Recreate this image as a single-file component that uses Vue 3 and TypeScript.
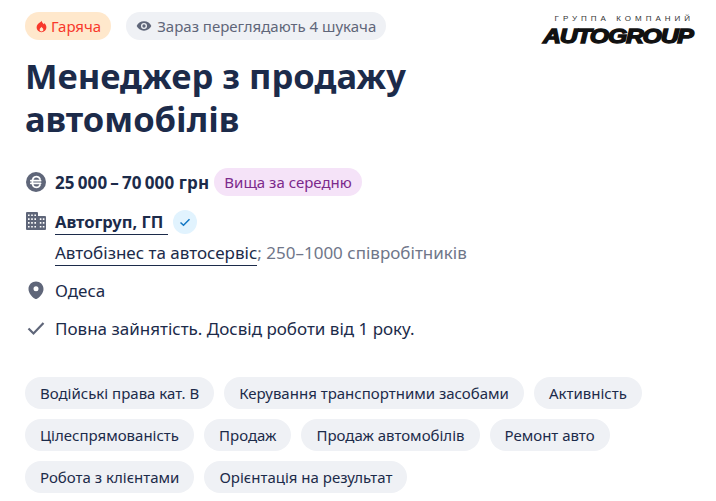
<template>
  <div class="job">
    <div class="top">
      <div class="badges">
        <span class="badge hot">
          <svg class="flame" viewBox="0 0 16 16" width="13" height="13">
            <path fill="#f8382b" fill-rule="evenodd" d="M8.200 1c.4 2.200 1.500 3 2.700 4.300.3-.5.5-1 .5-1.600C13 5 14 6.900 14 9c0 3.300-2.700 6-6 6s-6-2.700-6-6c0-2.900 2-4.300 3.500-5.600C6.800 2.600 7.800 2 8.200 1zM8 8.200c-.5 1.100-2.300 2-2.300 3.800 0 1.300 1 2.100 2.300 2.100s2.300-.8 2.300-2.100c0-1.800-1.800-2.700-2.300-3.800z" />
          </svg>
          Гаряча
        </span>
        <span class="badge viewers">
          <svg viewBox="0 0 24 24" width="16" height="16">
            <path fill="#5f6679" d="M12 5C7 5 2.700 8.100 1 12c1.700 3.900 6 7 11 7s9.300-3.100 11-7c-1.700-3.900-6-7-11-7zm0 11.500a4.500 4.500 0 1 1 0-9 4.500 4.500 0 0 1 0 9zm0-7a2.500 2.500 0 1 0 0 5 2.500 2.500 0 0 0 0-5z" />
          </svg>
          Зараз переглядають 4 шукача
        </span>
      </div>
      <div class="logo">
        <span class="logo-sub">ГРУППА КОМПАНИЙ</span>
        <span class="logo-main">AUTOGROUP</span>
      </div>
    </div>

    <h1>Менеджер з продажу автомобілів</h1>

    <ul class="facts">
      <li class="fact">
        <svg class="ico" viewBox="0 0 20 20" width="20" height="20">
          <circle cx="10" cy="10" r="10" fill="#5f6679" />
          <path fill="none" stroke="#fff" stroke-width="1.700" stroke-linecap="round" d="M14 7C13.400 5.400 12 4.600 10.300 4.600 8 4.600 6.400 6.700 6.400 10s1.600 5.400 3.900 5.400c1.700 0 3.100-.8 3.700-2.400M4.800 8.700h9.800M4.800 11.300h9.800" />
        </svg>
        <span class="salary">25&#8201;000&#8201;–&#8201;70&#8201;000 грн</span>
        <span class="avg">Вища за середню</span>
      </li>
      <li class="fact company">
        <svg class="ico" viewBox="0 0 20 20" width="20" height="20">
          <path fill="#5f6679" fill-rule="evenodd" d="M1 1h10a1 1 0 0 1 1 1v3h7a1 1 0 0 1 1 1v12a1 1 0 0 1-1 1H1a1 1 0 0 1-1-1V2a1 1 0 0 1 1-1zm1 2.500v1.600h1.600V3.500H2zm3.200 0v1.600h1.600V3.500H5.200zm3.200 0v1.600H10V3.500H8.400zM2 7.300v1.600h1.600V7.300H2zm3.200 0v1.600h1.600V7.300H5.200zm3.200 0v1.600H10V7.300H8.400zM2 11.100v1.600h1.600v-1.600H2zm3.200 0v1.600h1.600v-1.600H5.200zm3.200 0v1.600H10v-1.600H8.400zM2 14.900v1.600h1.600v-1.600H2zm3.200 0v1.600h1.600v-1.600H5.200zm3.200 0v1.600H10v-1.600H8.400zm5.400-7.600v1.600h1.600V7.300h-1.600zm3 0v1.600h1.600V7.300h-1.600zm-3 3.800v1.600h1.600v-1.600h-1.600zm3 0v1.600h1.600v-1.600h-1.600zm-3 3.800v1.600h1.600v-1.600h-1.600zm3 0v1.600h1.600v-1.600h-1.600z" />
        </svg>
        <div class="company-info">
          <div class="company-name">
            <a class="name-link">Автогруп, ГП</a>
            <span class="verified">
              <svg viewBox="0 0 12 12" width="12" height="12">
                <path fill="none" stroke="#1277c4" stroke-width="1.500" d="M1.500 6.500 4.500 9.300 10.500 3.200" />
              </svg>
            </span>
          </div>
          <div class="company-meta"><a class="sector">Автобізнес та автосервіс</a><span class="muted">; 250–1000 співробітників</span></div>
        </div>
      </li>
      <li class="fact">
        <svg class="ico" viewBox="0 0 20 20" width="20" height="20">
          <path fill="#5f6679" fill-rule="evenodd" d="M10 1.500c-4.100 0-7.500 3.200-7.500 7.400 0 3.800 3.100 7.600 6.500 9.800.6.400 1.400.4 2 0 3.400-2.200 6.500-6 6.500-9.800 0-4.200-3.400-7.400-7.500-7.400zm0 9.700a2.500 2.500 0 1 1 0-5 2.500 2.500 0 0 1 0 5z" />
        </svg>
        <span>Одеса</span>
      </li>
      <li class="fact">
        <svg class="ico" viewBox="0 0 20 20" width="20" height="20">
          <path fill="none" stroke="#5f6679" stroke-width="2.200" d="M2.500 10.500 7.500 15.500 17.500 5" />
        </svg>
        <span>Повна зайнятість. Досвід роботи від 1 року.</span>
      </li>
    </ul>

    <div class="skills">
      <span v-for="skill in skills" :key="skill" class="skill">{{ skill }}</span>
    </div>
  </div>
</template>

<script setup lang="ts">
const skills: string[] = [
  'Водійські права кат. B',
  'Керування транспортними засобами',
  'Активність',
  'Цілеспрямованість',
  'Продаж',
  'Продаж автомобілів',
  'Ремонт авто',
  'Робота з клієнтами',
  'Орієнтація на результат',
]
</script>

<style>
body {
  background: #fff;
}
</style>

<style scoped>
.job {
  width: 716px;
  height: 501px;
  box-sizing: border-box;
  padding: 12px 20px 0 25px;
  overflow: hidden;
  font-family: 'Noto Sans', sans-serif;
  font-size: 17px;
  color: #1c2b4a;
}

.top {
  display: flex;
  justify-content: space-between;
  align-items: flex-start;
}

.badges {
  display: flex;
  gap: 15px;
}

.badge {
  display: inline-flex;
  align-items: center;
  height: 28px;
  padding: 0 10px;
  border-radius: 14px;
  font-size: 15px;
}

.hot {
  gap: 3px;
  background: #ffe8cc;
  color: #f8382b;
}

.viewers {
  gap: 5px;
  background: #eff1f5;
  color: #5f6679;
}

.logo {
  display: flex;
  flex-direction: column;
  align-items: flex-end;
  margin-top: 3px;
  line-height: 1;
  color: #111;
}

.logo-sub {
  font-family: 'Liberation Sans', sans-serif;
  font-size: 8px;
  letter-spacing: 4px;
  margin-right: 2px;
  color: #333;
}

.logo-main {
  font-family: 'Liberation Sans', sans-serif;
  font-weight: 700;
  font-style: italic;
  font-size: 20px;
  letter-spacing: -1px;
  -webkit-text-stroke: 1.300px #111;
  margin-top: 3px;
  margin-right: 3px;
  transform: scaleX(1.24);
  transform-origin: right center;
}

h1 {
  width: 480px;
  margin: 8px 0 0;
  font-size: 34.500px;
  line-height: 43px;
  font-weight: 700;
  color: #1c2b4a;
}

.facts {
  list-style: none;
  margin: 28px 0 0;
  padding: 0;
}

.fact {
  display: flex;
  align-items: center;
  gap: 9px;
  min-height: 28px;
  margin-bottom: 10px;
  padding-left: 1px;
}

.fact:first-child {
  margin-bottom: 12px;
}

.company {
  margin-bottom: 11px;
  align-items: flex-start;
}

.ico {
  flex: none;
}

.salary {
  font-weight: 700;
  letter-spacing: 0.15px;
}

.avg {
  display: inline-flex;
  align-items: center;
  height: 28px;
  margin-left: -4px;
  padding: 0 10px;
  border-radius: 14px;
  background: #f5e3f8;
  color: #7c2a8c;
  font-size: 15px;
}

.company .ico {
  margin-top: 3px;
}

.company-name {
  display: flex;
  align-items: center;
  gap: 5px;
  height: 28px;
}

.name-link {
  font-size: 16.500px;
  font-weight: 700;
  padding-right: 5px;
  border-bottom: 1px solid #1c2b4a;
  line-height: 24px;
}

.verified {
  display: inline-flex;
  align-items: center;
  justify-content: center;
  width: 24px;
  height: 24px;
  border-radius: 50%;
  background: #e1f3fe;
}

.company-meta {
  margin-top: 5px;
  line-height: 24px;
}

.sector {
  border-bottom: 1px solid #1c2b4a;
  padding-bottom: 1px;
}

.muted {
  color: #6f7689;
}

.skills {
  display: flex;
  flex-wrap: wrap;
  gap: 10px;
  margin-top: 35px;
}

.skill {
  display: inline-flex;
  align-items: center;
  height: 32px;
  padding: 0 15px;
  border-radius: 16px;
  background: #eff1f5;
  font-size: 15px;
  color: #1c2b4a;
}
</style>
